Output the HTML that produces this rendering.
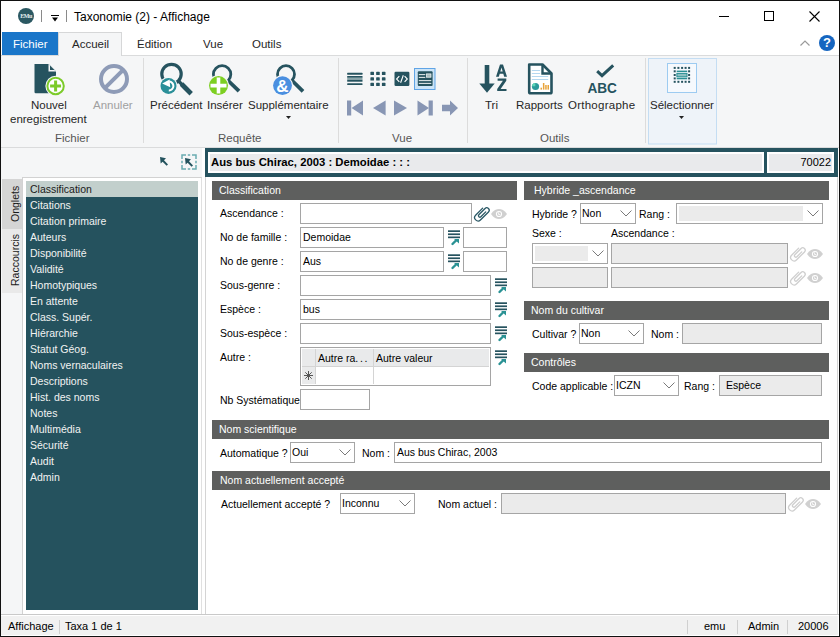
<!DOCTYPE html>
<html><head><meta charset="utf-8">
<style>
*{margin:0;padding:0;box-sizing:border-box}
html,body{width:840px;height:637px;overflow:hidden;background:#fff}
body{position:relative;font-family:"Liberation Sans",sans-serif;color:#000}
.a{position:absolute}
.t{position:absolute;white-space:pre;font-size:10.5px;line-height:12px}
.r{position:absolute;white-space:pre;font-size:11.5px;line-height:13px;color:#262626}
.in{position:absolute;border:1px solid #a3a3a3;background:#fff}
.dis{background:#ebebeb}
.hdr{position:absolute;background:#5e5f5e;color:#fff;font-size:10.5px;line-height:12px;white-space:pre}
svg{position:absolute;overflow:visible}
</style></head><body>
<!-- window border -->
<div class="a" style="left:0;top:0;width:840px;height:637px;border:1px solid #111"></div>

<!-- TITLE BAR -->
<div class="a" style="left:18px;top:8px;width:16px;height:16px;border-radius:50%;background:#2b5862"></div>
<div class="a" style="left:18px;top:13px;width:16px;font:bold 6px 'Liberation Serif',serif;color:#e8eef0;text-align:center;letter-spacing:-0.5px">EMu</div>
<div class="a" style="left:41px;top:10px;width:1px;height:12px;background:#8a8a8a"></div>
<div class="a" style="left:51px;top:15px;width:8px;height:1px;background:#000"></div>
<svg style="left:51px;top:17px" width="8" height="5"><path d="M1 0.5h6l-3 4z" fill="#000"/></svg>
<div class="a" style="left:66px;top:10px;width:1px;height:12px;background:#8a8a8a"></div>
<div class="r" style="left:74px;top:10px;font-size:12px;line-height:14px;color:#000">Taxonomie (2) - Affichage</div>
<!-- window controls -->
<div class="a" style="left:719px;top:16px;width:10px;height:1px;background:#000"></div>
<div class="a" style="left:764px;top:11px;width:10px;height:10px;border:1px solid #000"></div>
<svg style="left:809px;top:11px" width="11" height="11"><path d="M0.5 0.5L10.5 10.5M10.5 0.5L0.5 10.5" stroke="#000" stroke-width="1.1"/></svg>

<!-- TABS -->
<div class="a" style="left:1px;top:55px;width:838px;height:1px;background:#dadbdc"></div>
<div class="a" style="left:2px;top:32px;width:56px;height:23px;background:#1a76c9"></div>
<div class="r" style="left:13px;top:38px;color:#fff">Fichier</div>
<div class="a" style="left:58px;top:32px;width:64px;height:24px;background:#f5f6f7;border:1px solid #d6d7d8;border-bottom:none"></div>
<div class="r" style="left:72px;top:38px">Accueil</div>
<div class="r" style="left:137px;top:38px">Édition</div>
<div class="r" style="left:203px;top:38px">Vue</div>
<div class="r" style="left:252px;top:38px">Outils</div>
<svg style="left:800px;top:40px" width="10" height="6"><path d="M0.5 5.5L5 1L9.5 5.5" stroke="#9a9a9a" stroke-width="1.2" fill="none"/></svg>
<div class="a" style="left:819px;top:35px;width:16px;height:16px;border-radius:50%;background:#1565c0"></div>
<div class="a" style="left:819px;top:36px;width:16px;text-align:center;font:bold 13px/14px 'Liberation Sans';color:#fff">?</div>

<!-- RIBBON -->
<div class="a" style="left:1px;top:56px;width:838px;height:91px;background:#f5f6f7"></div>
<div class="a" style="left:1px;top:147px;width:838px;height:1px;background:#dadbdc"></div>
<!-- separators -->
<div class="a" style="left:143px;top:58px;width:1px;height:85px;background:#dcdcdc"></div>
<div class="a" style="left:338px;top:58px;width:1px;height:85px;background:#dcdcdc"></div>
<div class="a" style="left:467px;top:58px;width:1px;height:85px;background:#dcdcdc"></div>
<div class="a" style="left:645px;top:58px;width:1px;height:85px;background:#dcdcdc"></div>

<!--RIB-->
<svg style="left:0;top:0" width="840" height="150">
<path d="M34.5 64H48.5L56 71.5V92A1.2 1.2 0 0 1 54.8 93.2H35.7A1.2 1.2 0 0 1 34.5 92Z" fill="#26535f"/>
<path d="M48.5 64V71.5H56Z" fill="#f5f6f7"/><path d="M50 65.5L54.5 70H50Z" fill="#26535f"/>
<circle cx="55.6" cy="86" r="10.2" fill="#f5f6f7"/>
<circle cx="55.6" cy="86" r="8.2" fill="#fff" stroke="#7ccb2a" stroke-width="2"/>
<path d="M55.6 80.5V91.5M50.1 86H61.1" stroke="#7ccb2a" stroke-width="3"/>
<!-- Annuler -->
<circle cx="114" cy="79" r="13" fill="none" stroke="#8e9bb7" stroke-width="4"/>
<path d="M104.8 88.2L123.2 69.8" stroke="#8e9bb7" stroke-width="4"/>
<!-- Precedent -->
<circle cx="171.5" cy="74" r="9.7" fill="none" stroke="#26535f" stroke-width="3.2"/>
<path d="M178 80.5L182.5 85" stroke="#26535f" stroke-width="3.2"/>
<path d="M181.5 84L191.2 93.7" stroke="#26535f" stroke-width="4.8"/>
<circle cx="168.5" cy="85.9" r="9.2" fill="#f5f6f7"/>
<circle cx="168.5" cy="85.9" r="8" fill="#2a8f98"/>
<path d="M169.2 81.6A4.4 4.4 0 0 1 168.8 90.4" stroke="#fff" stroke-width="2" fill="none"/>
<path d="M162.2 83.4L169.6 79.4L170.2 87.2Z" fill="#fff"/>
<!-- Inserer -->
<circle cx="222.1" cy="74.3" r="8.7" fill="none" stroke="#26535f" stroke-width="2.8"/>
<path d="M228 80.5L239 91.2" stroke="#26535f" stroke-width="3.8"/>
<circle cx="218.5" cy="85.6" r="10.6" fill="#f5f6f7"/>
<circle cx="218.5" cy="85.6" r="9.5" fill="#7dcf22"/>
<path d="M218.5 77.6V93.6M210.5 85.6H226.5" stroke="#fff" stroke-width="3.6"/>
<!-- Supplementaire -->
<circle cx="286" cy="74.2" r="8.5" fill="none" stroke="#26535f" stroke-width="2.8"/>
<path d="M292 80.5L303 91.3" stroke="#26535f" stroke-width="3.8"/>
<circle cx="282.5" cy="85.6" r="10.5" fill="#f5f6f7"/>
<circle cx="282.5" cy="85.6" r="9.4" fill="#4a8fe0"/>
<text x="282.3" y="92" text-anchor="middle" font-family="Liberation Sans" font-weight="bold" font-size="17" fill="#fff">&amp;</text>
<!-- Vue row1 -->
<rect x="347.2" y="72.8" width="15.3" height="1.9" rx="0.5" fill="#26535f"/>
<rect x="347.2" y="76" width="15.3" height="1.8" fill="#26535f"/>
<rect x="347.2" y="77.8" width="15.3" height="2" fill="#8aa6aa"/>
<rect x="347.2" y="79.8" width="15.3" height="1.9" fill="#26535f"/>
<rect x="347.2" y="83.2" width="15.3" height="1.9" rx="0.5" fill="#26535f"/>

<rect x="370.4" y="71.8" width="3.6" height="3.3" rx="0.6" fill="#26535f"/>
<rect x="370.4" y="77.3" width="3.6" height="3.3" rx="0.6" fill="#26535f"/>
<rect x="370.4" y="82.8" width="3.6" height="3.3" rx="0.6" fill="#26535f"/>
<rect x="376.15" y="71.8" width="3.6" height="3.3" rx="0.6" fill="#26535f"/>
<rect x="376.15" y="77.3" width="3.6" height="3.3" rx="0.6" fill="#26535f"/>
<rect x="376.15" y="82.8" width="3.6" height="3.3" rx="0.6" fill="#26535f"/>
<rect x="381.9" y="71.8" width="3.6" height="3.3" rx="0.6" fill="#26535f"/>
<rect x="381.9" y="77.3" width="3.6" height="3.3" rx="0.6" fill="#26535f"/>
<rect x="381.9" y="82.8" width="3.6" height="3.3" rx="0.6" fill="#26535f"/>
<rect x="394.5" y="71.8" width="14.9" height="14.2" rx="1.2" fill="#26535f"/>
<path d="M399.3 76.2L396.6 79L399.3 81.8M403.3 75.3L400.6 82.7M404.6 76.2L407.3 79L404.6 81.8" stroke="#fff" stroke-width="1.1" fill="none"/>
<rect x="414.5" y="68.5" width="20.5" height="21" fill="#cce4f7" stroke="#5fa4e6" stroke-width="1"/>
<rect x="417.8" y="71.3" width="14.8" height="14.7" rx="1" fill="#26535f"/>
<rect x="418.8" y="74.2" width="6.5" height="0.9" fill="#fff"/><rect x="426.6" y="73.9" width="4.4" height="3.3" fill="#a8bcbf" stroke="#fff" stroke-width="0.7"/>
<rect x="418.8" y="76.9" width="6.5" height="0.9" fill="#fff"/>
<rect x="418.8" y="80.2" width="12.5" height="0.9" fill="#fff"/>
<rect x="418.8" y="82.9" width="12.5" height="0.9" fill="#fff"/>
<!-- Vue row2 nav -->
<g fill="#8896b4">
<rect x="347" y="100.5" width="4.2" height="15"/><path d="M351.5 108L363 100.5V115.5Z"/>
<path d="M373 108L385.6 100.5V115.5Z"/>
<path d="M394 100.5L407 108L394 115.5Z"/>
<path d="M417.5 100.5L429 108L417.5 115.5Z"/><rect x="428.6" y="100.5" width="4.2" height="15"/>
<path d="M442 104.7H450V100.4L458 108L450 115.5V111.2H442Z"/>
</g>
<!-- Tri -->
<rect x="484.7" y="65" width="4.6" height="19" fill="#26535f"/>
<path d="M479.3 83.5H494.7L487 92.8Z" fill="#26535f"/>
<path fill-rule="evenodd" d="M496 76.7L500 64.5H503L507 76.7H504.2L503.3 73.7H499.7L498.8 76.7ZM500.3 71.5H502.7L501.5 67.4Z" fill="#26535f"/>
<path d="M497.6 78.6H506.3V80.8L500.6 88.9H506.5V91.1H497.2V88.9L502.9 80.8H497.6Z" fill="#26535f"/>
<!-- Rapports -->
<path d="M529.2 64.5H542.5L551.5 73.5V92A1.3 1.3 0 0 1 550.2 93.3H530.5A1.3 1.3 0 0 1 529.2 92Z" fill="#fff" stroke="#26535f" stroke-width="2.6" stroke-linejoin="round"/>
<path d="M542.5 64.5V73.5H551.5" fill="none" stroke="#26535f" stroke-width="2.4"/>
<g fill="#b5d8f0"><rect x="531.8" y="70" width="8.3" height="1"/><rect x="531.8" y="73" width="8.3" height="1"/><rect x="531.8" y="76" width="16.4" height="1"/><rect x="531.8" y="79" width="16.4" height="1"/></g>
<circle cx="535.5" cy="86.5" r="3.6" fill="#2a9b9b"/><path d="M532 86.3A3.6 3.6 0 0 1 535.3 82.9V86.3Z" fill="#5ed6b8"/>
<g fill="#e8a33a"><rect x="540.5" y="87.7" width="1.5" height="1.9"/><rect x="542.9" y="83" width="1.5" height="6.6"/><rect x="545.2" y="85" width="1.5" height="4.6"/><rect x="547.5" y="85" width="1.5" height="4.6"/></g>
<!-- Orthographe -->
<path d="M597.2 71.2L602 75.6L613.2 65.4" fill="none" stroke="#26535f" stroke-width="3"/>
<text x="602.2" y="92.7" text-anchor="middle" font-family="Liberation Sans" font-weight="bold" font-size="15.3" fill="#26535f" textLength="29.5" lengthAdjust="spacingAndGlyphs">ABC</text>
<!-- Selectionner -->
<rect x="648.5" y="58.5" width="68" height="85.5" fill="#eef3f9" stroke="#c4ddf3" stroke-width="1"/>
<rect x="667.5" y="63.5" width="29" height="29" fill="#f6f9fd" stroke="#9dcbf1" stroke-width="1"/>
<rect x="673.7" y="66.9" width="2" height="2" fill="#26535f"/><rect x="673.7" y="70.3" width="2" height="2" fill="#26535f"/><rect x="673.7" y="74.0" width="2" height="2" fill="#26535f"/><rect x="673.7" y="77.4" width="2" height="2" fill="#26535f"/><rect x="673.7" y="80.8" width="2" height="2" fill="#26535f"/><rect x="677.4" y="66.9" width="2" height="2" fill="#26535f"/><rect x="677.4" y="80.8" width="2" height="2" fill="#26535f"/><rect x="681.1" y="66.9" width="2" height="2" fill="#26535f"/><rect x="681.1" y="80.8" width="2" height="2" fill="#26535f"/><rect x="684.6" y="66.9" width="2" height="2" fill="#26535f"/><rect x="684.6" y="80.8" width="2" height="2" fill="#26535f"/><rect x="688.1" y="66.9" width="2" height="2" fill="#26535f"/><rect x="688.1" y="70.3" width="2" height="2" fill="#26535f"/><rect x="688.1" y="74.0" width="2" height="2" fill="#26535f"/><rect x="688.1" y="77.4" width="2" height="2" fill="#26535f"/><rect x="688.1" y="80.8" width="2" height="2" fill="#26535f"/>
<rect x="676.7" y="70.6" width="10.5" height="1.5" fill="#2a8f95"/>
<rect x="676.9" y="73.4" width="10.1" height="3.4" fill="#8cc0c2" stroke="#2a8f95" stroke-width="1"/>
<rect x="676.7" y="77.8" width="10.5" height="1.5" fill="#2a8f95"/>
</svg>
<!--/RIB-->
<!-- ribbon labels -->
<div class="r" style="left:31px;top:99px">Nouvel</div>
<div class="r" style="left:10px;top:113px">enregistrement</div>
<div class="r" style="left:93px;top:99px;color:#a0a0a0">Annuler</div>
<div class="r" style="left:150px;top:99px">Précédent</div>
<div class="r" style="left:207px;top:99px">Insérer</div>
<div class="r" style="left:248px;top:99px">Supplémentaire</div>
<svg style="left:286px;top:116px" width="5" height="3"><path d="M0 0h5l-2.5 3z" fill="#222"/></svg>
<div class="r" style="left:485px;top:99px">Tri</div>
<div class="r" style="left:516px;top:99px">Rapports</div>
<div class="r" style="left:568px;top:99px;letter-spacing:0.25px">Orthographe</div>
<div class="r" style="left:650px;top:99px">Sélectionner</div>
<svg style="left:679px;top:116px" width="5" height="3"><path d="M0 0h5l-2.5 3z" fill="#222"/></svg>
<div class="r" style="left:55px;top:132px;color:#555">Fichier</div>
<div class="r" style="left:218px;top:132px;color:#555">Requête</div>
<div class="r" style="left:392px;top:132px;color:#555">Vue</div>
<div class="r" style="left:540px;top:132px;color:#555">Outils</div>

<!-- LEFT PANEL -->
<div class="a" style="left:1px;top:148px;width:201px;height:466px;background:#f5f6f7"></div>
<!-- top icons -->
<svg style="left:159px;top:156px" width="11" height="11"><path d="M1 1L1.7 7.6L3.6 5.7L7.6 9.8L9 8.4L5 4.3L7 2.3Z" fill="#24535e"/></svg>
<svg style="left:181px;top:154px" width="16" height="16" viewBox="0 0 16 16"><path d="M1 5V1H5M11 1H15V5M15 11V15H11M5 15H1V11M6.8 1H9.2M6.8 15H9.2M1 6.8V9.2M15 6.8V9.2" stroke="#6aacb1" stroke-width="1.5" fill="none"/></svg>
<svg style="left:184px;top:157px" width="11" height="11"><path d="M1 1L1.7 7.6L3.6 5.7L7.6 9.8L9 8.4L5 4.3L7 2.3Z" fill="#24535e"/></svg>
<!-- vertical tabs -->
<div class="a" style="left:2px;top:179px;width:20px;height:50px;background:#d5d5d5"></div>
<div class="a" style="left:2px;top:229px;width:20px;height:64px;background:#e9e9e9"></div>
<div class="t" style="left:-3px;top:198px;width:36px;transform:rotate(-90deg);text-align:center;color:#1a1a1a">Onglets</div>
<div class="t" style="left:-11px;top:254px;width:52px;transform:rotate(-90deg);text-align:center;color:#1a1a1a">Raccourcis</div>
<!-- list frame -->
<div class="a" style="left:22px;top:177px;width:180px;height:438px;border:1px solid #d2d2d2;border-right-color:#e0e0e0;background:#fff"></div>
<div class="a" style="left:26px;top:181px;width:172px;height:429px;background:#25525e"></div>
<div class="a" style="left:26px;top:181px;width:172px;height:16px;background:#c2cfcc"></div>
<div class="t" style="left:30px;top:183px;color:#1a1a1a">Classification</div>
<div class="t" style="left:30px;top:199px;color:#f2f2f2">Citations</div>
<div class="t" style="left:30px;top:215px;color:#f2f2f2">Citation primaire</div>
<div class="t" style="left:30px;top:231px;color:#f2f2f2">Auteurs</div>
<div class="t" style="left:30px;top:247px;color:#f2f2f2">Disponibilité</div>
<div class="t" style="left:30px;top:263px;color:#f2f2f2">Validité</div>
<div class="t" style="left:30px;top:279px;color:#f2f2f2">Homotypiques</div>
<div class="t" style="left:30px;top:295px;color:#f2f2f2">En attente</div>
<div class="t" style="left:30px;top:311px;color:#f2f2f2">Class. Supér.</div>
<div class="t" style="left:30px;top:327px;color:#f2f2f2">Hiérarchie</div>
<div class="t" style="left:30px;top:343px;color:#f2f2f2">Statut Géog.</div>
<div class="t" style="left:30px;top:359px;color:#f2f2f2">Noms vernaculaires</div>
<div class="t" style="left:30px;top:375px;color:#f2f2f2">Descriptions</div>
<div class="t" style="left:30px;top:391px;color:#f2f2f2">Hist. des noms</div>
<div class="t" style="left:30px;top:407px;color:#f2f2f2">Notes</div>
<div class="t" style="left:30px;top:423px;color:#f2f2f2">Multimédia</div>
<div class="t" style="left:30px;top:439px;color:#f2f2f2">Sécurité</div>
<div class="t" style="left:30px;top:455px;color:#f2f2f2">Audit</div>
<div class="t" style="left:30px;top:471px;color:#f2f2f2">Admin</div>

<!-- MAIN -->
<!--MAIN-->
<div class="a" style="left:202px;top:148px;width:637px;height:467px;background:#fff"></div>
<div class="a" style="left:205px;top:177px;width:633px;height:438px;border:1px solid #d4d4d4;border-top:none;background:#fff"></div>
<div class="a" style="left:1px;top:614px;width:838px;height:1px;background:#c9c9c9"></div>
<div class="a" style="left:205px;top:148px;width:633px;height:29px;background:#26535f"></div>
<div class="a" style="left:208px;top:152px;width:556px;height:21px;border:2px solid #fff;background:#e9eaec"></div>
<div class="a" style="left:767px;top:152px;width:67px;height:21px;border:2px solid #fff;background:#e9eaec"></div>
<div class="t" style="left:211px;top:156px;font-weight:bold;font-size:11.3px;line-height:12px">Aus bus Chirac, 2003 : Demoidae : : :</div>
<div class="t" style="left:760px;top:156px;width:71px;text-align:right;font-size:11px;line-height:12px">70022</div>
<div class="hdr" style="left:212px;top:181px;width:305px;height:19px;padding:3px 0 0 7px">Classification</div>
<div class="t" style="left:220px;top:207px;color:#000;">Ascendance :</div>
<div class="t" style="left:220px;top:231px;color:#000;">No de famille :</div>
<div class="t" style="left:220px;top:255px;color:#000;">No de genre :</div>
<div class="t" style="left:220px;top:279px;color:#000;">Sous-genre :</div>
<div class="t" style="left:220px;top:303px;color:#000;">Espèce :</div>
<div class="t" style="left:220px;top:327px;color:#000;">Sous-espèce :</div>
<div class="t" style="left:220px;top:351px;color:#000;">Autre :</div>
<div class="a" style="left:300px;top:203px;width:172px;height:21px;border:1px solid #a5a5a5;background:#fff"></div>
<svg style="left:474px;top:206px" width="16" height="16" viewBox="0 0 16 16"><path transform="translate(8.05 7.55) rotate(45) scale(0.9 0.86)" d="M-3.8 -5V6.65A3.8 3.8 0 0 0 3.8 6.65V-6.65A2.7 2.7 0 0 0 -1.6 -6.65V3.6A1.6 1.6 0 0 0 1.6 3.6V-4.4" stroke="#2a5865" stroke-width="1.45" fill="none" stroke-linecap="round"/></svg>
<svg style="left:491px;top:209px" width="16" height="10" viewBox="0 0 16 10"><path d="M0 5C2.8 1.2 5.4 0 8 0S13.2 1.2 16 5C13.2 8.8 10.6 10 8 10S2.8 8.8 0 5Z" fill="#d0d0d0"/><circle cx="8" cy="5" r="3.1" fill="#fff"/><circle cx="8" cy="5" r="2.1" fill="#d0d0d0"/><path d="M7.6 3.4V5.5H9.3" stroke="#fff" stroke-width="0.8" fill="none"/></svg>
<div class="a" style="left:300px;top:227px;width:144px;height:21px;border:1px solid #a5a5a5;background:#fff"></div>
<div class="t" style="left:303px;top:231px;color:#000;">Demoidae</div>
<svg style="left:448px;top:230px" width="13" height="15" viewBox="0 0 13 15"><rect x="0" y="0.3" width="12" height="1.7" fill="#26535f"/><rect x="0" y="3.4" width="12" height="1.7" fill="#26535f"/><rect x="0" y="6.5" width="12" height="1.7" fill="#26535f"/><path d="M4.5 14L8 10.5" stroke="#2a9294" stroke-width="2.4" stroke-linecap="round"/><path d="M6 9H11V13.5Z" fill="#2a9294"/></svg>
<div class="a" style="left:463px;top:227px;width:44px;height:21px;border:1px solid #a5a5a5;background:#fff"></div>
<div class="a" style="left:300px;top:251px;width:144px;height:21px;border:1px solid #a5a5a5;background:#fff"></div>
<div class="t" style="left:303px;top:255px;color:#000;">Aus</div>
<svg style="left:448px;top:254px" width="13" height="15" viewBox="0 0 13 15"><rect x="0" y="0.3" width="12" height="1.7" fill="#26535f"/><rect x="0" y="3.4" width="12" height="1.7" fill="#26535f"/><rect x="0" y="6.5" width="12" height="1.7" fill="#26535f"/><path d="M4.5 14L8 10.5" stroke="#2a9294" stroke-width="2.4" stroke-linecap="round"/><path d="M6 9H11V13.5Z" fill="#2a9294"/></svg>
<div class="a" style="left:463px;top:251px;width:44px;height:21px;border:1px solid #a5a5a5;background:#fff"></div>
<div class="a" style="left:300px;top:275px;width:191px;height:21px;border:1px solid #a5a5a5;background:#fff"></div>
<svg style="left:495px;top:278px" width="13" height="15" viewBox="0 0 13 15"><rect x="0" y="0.3" width="12" height="1.7" fill="#26535f"/><rect x="0" y="3.4" width="12" height="1.7" fill="#26535f"/><rect x="0" y="6.5" width="12" height="1.7" fill="#26535f"/><path d="M4.5 14L8 10.5" stroke="#2a9294" stroke-width="2.4" stroke-linecap="round"/><path d="M6 9H11V13.5Z" fill="#2a9294"/></svg>
<div class="a" style="left:300px;top:299px;width:191px;height:21px;border:1px solid #a5a5a5;background:#fff"></div>
<div class="t" style="left:303px;top:303px;color:#000;">bus</div>
<svg style="left:495px;top:302px" width="13" height="15" viewBox="0 0 13 15"><rect x="0" y="0.3" width="12" height="1.7" fill="#26535f"/><rect x="0" y="3.4" width="12" height="1.7" fill="#26535f"/><rect x="0" y="6.5" width="12" height="1.7" fill="#26535f"/><path d="M4.5 14L8 10.5" stroke="#2a9294" stroke-width="2.4" stroke-linecap="round"/><path d="M6 9H11V13.5Z" fill="#2a9294"/></svg>
<div class="a" style="left:300px;top:323px;width:191px;height:21px;border:1px solid #a5a5a5;background:#fff"></div>
<svg style="left:495px;top:326px" width="13" height="15" viewBox="0 0 13 15"><rect x="0" y="0.3" width="12" height="1.7" fill="#26535f"/><rect x="0" y="3.4" width="12" height="1.7" fill="#26535f"/><rect x="0" y="6.5" width="12" height="1.7" fill="#26535f"/><path d="M4.5 14L8 10.5" stroke="#2a9294" stroke-width="2.4" stroke-linecap="round"/><path d="M6 9H11V13.5Z" fill="#2a9294"/></svg>
<div class="a" style="left:300px;top:347px;width:191px;height:39px;border:1px solid #a5a5a5;background:#fff"></div>
<div class="a" style="left:302px;top:349px;width:187px;height:17px;background:#e9eaeb"></div>
<div class="a" style="left:302px;top:366px;width:14px;height:18px;background:#e9eaeb"></div>
<div class="a" style="left:302px;top:366px;width:187px;height:1px;background:#d4d4d4"></div>
<div class="a" style="left:315px;top:349px;width:1px;height:35px;background:#d4d4d4"></div>
<div class="a" style="left:373px;top:349px;width:1px;height:35px;background:#d4d4d4"></div>
<div class="t" style="left:318px;top:352px;color:#000;">Autre ra<span style="letter-spacing:1.6px">...</span></div>
<div class="t" style="left:376px;top:352px;color:#000;">Autre valeur</div>
<svg style="left:304px;top:371px" width="9" height="9" viewBox="0 0 9 9"><path d="M4.5 0V9M0 4.5H9M1.3 1.3L7.7 7.7M1.3 7.7L7.7 1.3" stroke="#555" stroke-width="1"/></svg>
<svg style="left:495px;top:350px" width="13" height="15" viewBox="0 0 13 15"><rect x="0" y="0.3" width="12" height="1.7" fill="#26535f"/><rect x="0" y="3.4" width="12" height="1.7" fill="#26535f"/><rect x="0" y="6.5" width="12" height="1.7" fill="#26535f"/><path d="M4.5 14L8 10.5" stroke="#2a9294" stroke-width="2.4" stroke-linecap="round"/><path d="M6 9H11V13.5Z" fill="#2a9294"/></svg>
<div class="t" style="left:220px;top:394px;color:#000;">Nb Systématique</div>
<div class="a" style="left:300px;top:389px;width:70px;height:21px;border:1px solid #a5a5a5;background:#fff"></div>
<div class="hdr" style="left:524px;top:181px;width:305px;height:19px;padding:3px 0 0 10px">Hybride _ascendance</div>
<div class="t" style="left:532px;top:208px;color:#000;">Hybride ?</div>
<div class="a" style="left:580px;top:203px;width:56px;height:21px;border:1px solid #a5a5a5;background:#fff"></div>
<div class="t" style="left:582px;top:207px;color:#000;">Non</div>
<svg style="left:620px;top:210px" width="12" height="7"><path d="M0.5 0.5L6 6L11.5 0.5" stroke="#7a7a7a" stroke-width="1" fill="none"/></svg>
<div class="t" style="left:639px;top:208px;color:#000;">Rang :</div>
<div class="a" style="left:676px;top:203px;width:147px;height:21px;border:1px solid #a5a5a5;background:#fff"></div>
<div class="a" style="left:679px;top:206px;width:124px;height:15px;background:#ebebeb"></div>
<svg style="left:807px;top:210px" width="12" height="7"><path d="M0.5 0.5L6 6L11.5 0.5" stroke="#7a7a7a" stroke-width="1" fill="none"/></svg>
<div class="t" style="left:532px;top:227px;color:#000;">Sexe :</div>
<div class="t" style="left:611px;top:227px;color:#000;">Ascendance :</div>
<div class="a" style="left:532px;top:243px;width:76px;height:21px;border:1px solid #a5a5a5;background:#fff"></div>
<div class="a" style="left:535px;top:246px;width:53px;height:15px;background:#ebebeb"></div>
<svg style="left:592px;top:250px" width="12" height="7"><path d="M0.5 0.5L6 6L11.5 0.5" stroke="#7a7a7a" stroke-width="1" fill="none"/></svg>
<div class="a" style="left:611px;top:243px;width:177px;height:21px;border:1px solid #a5a5a5;background:#ebebeb"></div>
<svg style="left:790px;top:246px" width="16" height="16" viewBox="0 0 16 16"><path transform="translate(8.05 7.55) rotate(45) scale(0.9 0.86)" d="M-3.8 -5V6.65A3.8 3.8 0 0 0 3.8 6.65V-6.65A2.7 2.7 0 0 0 -1.6 -6.65V3.6A1.6 1.6 0 0 0 1.6 3.6V-4.4" stroke="#cfcfcf" stroke-width="1.45" fill="none" stroke-linecap="round"/></svg>
<svg style="left:807px;top:249px" width="16" height="10" viewBox="0 0 16 10"><path d="M0 5C2.8 1.2 5.4 0 8 0S13.2 1.2 16 5C13.2 8.8 10.6 10 8 10S2.8 8.8 0 5Z" fill="#d0d0d0"/><circle cx="8" cy="5" r="3.1" fill="#fff"/><circle cx="8" cy="5" r="2.1" fill="#d0d0d0"/><path d="M7.6 3.4V5.5H9.3" stroke="#fff" stroke-width="0.8" fill="none"/></svg>
<div class="a" style="left:532px;top:267px;width:76px;height:21px;border:1px solid #a5a5a5;background:#ebebeb"></div>
<div class="a" style="left:611px;top:267px;width:177px;height:21px;border:1px solid #a5a5a5;background:#ebebeb"></div>
<svg style="left:790px;top:270px" width="16" height="16" viewBox="0 0 16 16"><path transform="translate(8.05 7.55) rotate(45) scale(0.9 0.86)" d="M-3.8 -5V6.65A3.8 3.8 0 0 0 3.8 6.65V-6.65A2.7 2.7 0 0 0 -1.6 -6.65V3.6A1.6 1.6 0 0 0 1.6 3.6V-4.4" stroke="#cfcfcf" stroke-width="1.45" fill="none" stroke-linecap="round"/></svg>
<svg style="left:807px;top:273px" width="16" height="10" viewBox="0 0 16 10"><path d="M0 5C2.8 1.2 5.4 0 8 0S13.2 1.2 16 5C13.2 8.8 10.6 10 8 10S2.8 8.8 0 5Z" fill="#d0d0d0"/><circle cx="8" cy="5" r="3.1" fill="#fff"/><circle cx="8" cy="5" r="2.1" fill="#d0d0d0"/><path d="M7.6 3.4V5.5H9.3" stroke="#fff" stroke-width="0.8" fill="none"/></svg>
<div class="hdr" style="left:524px;top:301px;width:305px;height:19px;padding:3px 0 0 7px">Nom du cultivar</div>
<div class="t" style="left:532px;top:328px;color:#000;">Cultivar ?</div>
<div class="a" style="left:579px;top:323px;width:65px;height:21px;border:1px solid #a5a5a5;background:#fff"></div>
<div class="t" style="left:581px;top:327px;color:#000;">Non</div>
<svg style="left:628px;top:330px" width="12" height="7"><path d="M0.5 0.5L6 6L11.5 0.5" stroke="#7a7a7a" stroke-width="1" fill="none"/></svg>
<div class="t" style="left:651px;top:328px;color:#000;">Nom :</div>
<div class="a" style="left:682px;top:323px;width:140px;height:21px;border:1px solid #a5a5a5;background:#ebebeb"></div>
<div class="hdr" style="left:524px;top:353px;width:305px;height:19px;padding:3px 0 0 7px">Contrôles</div>
<div class="t" style="left:532px;top:380px;color:#000;">Code applicable :</div>
<div class="a" style="left:614px;top:375px;width:65px;height:21px;border:1px solid #a5a5a5;background:#fff"></div>
<div class="t" style="left:616px;top:379px;color:#000;">ICZN</div>
<svg style="left:663px;top:382px" width="12" height="7"><path d="M0.5 0.5L6 6L11.5 0.5" stroke="#7a7a7a" stroke-width="1" fill="none"/></svg>
<div class="t" style="left:684px;top:380px;color:#000;">Rang :</div>
<div class="a" style="left:719px;top:375px;width:103px;height:21px;border:1px solid #a5a5a5;background:#ebebeb"></div>
<div class="t" style="left:726px;top:379px;color:#000;">Espèce</div>
<div class="hdr" style="left:212px;top:420px;width:617px;height:19px;padding:3px 0 0 7px">Nom scientifique</div>
<div class="t" style="left:220px;top:447px;color:#000;">Automatique ?</div>
<div class="a" style="left:290px;top:442px;width:65px;height:21px;border:1px solid #a5a5a5;background:#fff"></div>
<div class="t" style="left:292px;top:446px;color:#000;">Oui</div>
<svg style="left:339px;top:449px" width="12" height="7"><path d="M0.5 0.5L6 6L11.5 0.5" stroke="#7a7a7a" stroke-width="1" fill="none"/></svg>
<div class="t" style="left:362px;top:447px;color:#000;">Nom :</div>
<div class="a" style="left:394px;top:442px;width:428px;height:21px;border:1px solid #a5a5a5;background:#fff"></div>
<div class="t" style="left:397px;top:446px;color:#000;">Aus bus Chirac, 2003</div>
<div class="hdr" style="left:212px;top:471px;width:618px;height:19px;padding:3px 0 0 8px">Nom actuellement accepté</div>
<div class="t" style="left:221px;top:498px;color:#000;">Actuellement accepté ?</div>
<div class="a" style="left:340px;top:493px;width:75px;height:21px;border:1px solid #a5a5a5;background:#fff"></div>
<div class="t" style="left:342px;top:497px;color:#000;">Inconnu</div>
<svg style="left:399px;top:500px" width="12" height="7"><path d="M0.5 0.5L6 6L11.5 0.5" stroke="#7a7a7a" stroke-width="1" fill="none"/></svg>
<div class="t" style="left:438px;top:498px;color:#000;">Nom actuel :</div>
<div class="a" style="left:501px;top:493px;width:285px;height:21px;border:1px solid #a5a5a5;background:#ebebeb"></div>
<svg style="left:788px;top:496px" width="16" height="16" viewBox="0 0 16 16"><path transform="translate(8.05 7.55) rotate(45) scale(0.9 0.86)" d="M-3.8 -5V6.65A3.8 3.8 0 0 0 3.8 6.65V-6.65A2.7 2.7 0 0 0 -1.6 -6.65V3.6A1.6 1.6 0 0 0 1.6 3.6V-4.4" stroke="#cfcfcf" stroke-width="1.45" fill="none" stroke-linecap="round"/></svg>
<svg style="left:805px;top:499px" width="16" height="10" viewBox="0 0 16 10"><path d="M0 5C2.8 1.2 5.4 0 8 0S13.2 1.2 16 5C13.2 8.8 10.6 10 8 10S2.8 8.8 0 5Z" fill="#d0d0d0"/><circle cx="8" cy="5" r="3.1" fill="#fff"/><circle cx="8" cy="5" r="2.1" fill="#d0d0d0"/><path d="M7.6 3.4V5.5H9.3" stroke="#fff" stroke-width="0.8" fill="none"/></svg>
<!--/MAIN-->
<!-- STATUS BAR -->
<div class="a" style="left:1px;top:614px;width:838px;height:1px;background:#c9c9c9"></div><div class="a" style="left:1px;top:615px;width:838px;height:1px;background:#fff"></div>
<div class="a" style="left:1px;top:616px;width:837px;height:19px;background:#f1f1f1"></div>
<div class="t" style="left:8px;top:620px;font-size:11px;line-height:13px">Affichage</div>
<div class="a" style="left:59px;top:620px;width:1px;height:14px;background:#d0d0d0"></div>
<div class="t" style="left:65px;top:620px;font-size:11px;line-height:13px">Taxa 1 de 1</div>
<div class="a" style="left:687px;top:620px;width:1px;height:14px;background:#d0d0d0"></div>
<div class="t" style="left:704px;top:620px;font-size:11px;line-height:13px">emu</div>
<div class="a" style="left:737px;top:620px;width:1px;height:14px;background:#d0d0d0"></div>
<div class="t" style="left:748px;top:620px;font-size:11px;line-height:13px">Admin</div>
<div class="a" style="left:787px;top:620px;width:1px;height:14px;background:#d0d0d0"></div>
<div class="t" style="left:798px;top:620px;font-size:11px;line-height:13px">20006</div>
</body></html>
